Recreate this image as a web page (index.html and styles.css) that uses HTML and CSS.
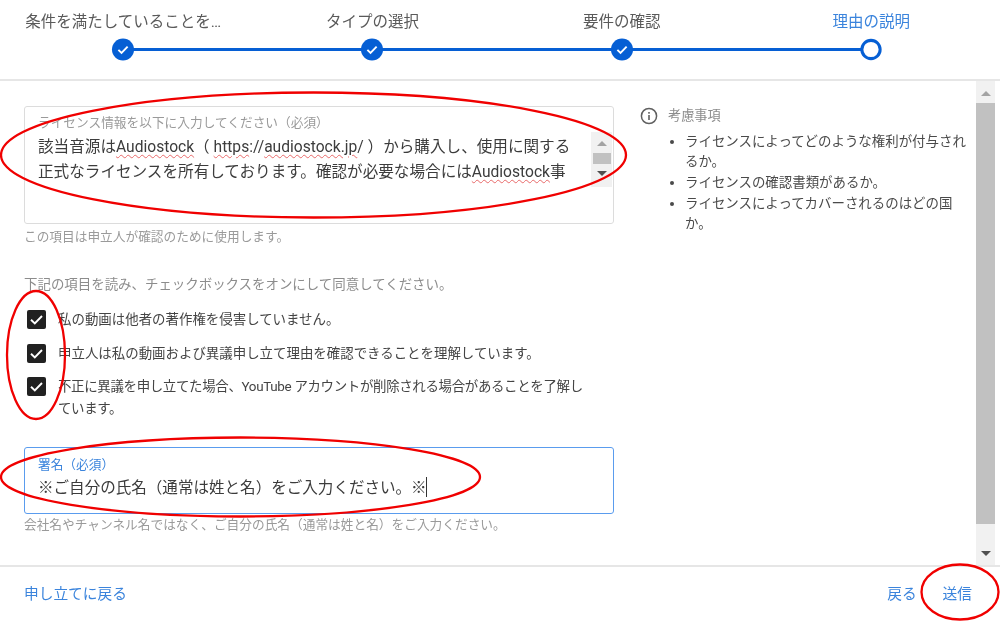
FILE: index.html
```html
<!DOCTYPE html>
<html lang="ja">
<head>
<meta charset="utf-8">
<title>理由の説明</title>
<link rel="stylesheet" href="styles.css">
</head>
<body>
<div class="app">
  <header class="stepper">
    <div class="step">
      <div class="step-label">条件を満たしていることを…</div>
      <div class="step-track first">
        <svg class="dot" viewBox="0 0 20 20"><circle cx="10" cy="10" r="10.5" fill="#065fd4"/><path d="M5.6 10.3l3 3 5.8-6" fill="none" stroke="#fff" stroke-width="1.8"/></svg>
      </div>
    </div>
    <div class="step">
      <div class="step-label">タイプの選択</div>
      <div class="step-track">
        <svg class="dot" viewBox="0 0 20 20"><circle cx="10" cy="10" r="10.5" fill="#065fd4"/><path d="M5.6 10.3l3 3 5.8-6" fill="none" stroke="#fff" stroke-width="1.8"/></svg>
      </div>
    </div>
    <div class="step">
      <div class="step-label">要件の確認</div>
      <div class="step-track">
        <svg class="dot" viewBox="0 0 20 20"><circle cx="10" cy="10" r="10.5" fill="#065fd4"/><path d="M5.6 10.3l3 3 5.8-6" fill="none" stroke="#fff" stroke-width="1.8"/></svg>
      </div>
    </div>
    <div class="step">
      <div class="step-label active">理由の説明</div>
      <div class="step-track last">
        <svg class="dot" viewBox="0 0 20 20"><circle cx="10" cy="10" r="8.7" fill="#fff" stroke="#065fd4" stroke-width="2.9"/></svg>
      </div>
    </div>
  </header>

  <div class="middle">
    <main class="content">
      <section class="form">
        <div class="field license">
          <div class="field-label">ライセンス情報を以下に入力してください（必須）</div>
          <div class="field-text"><div class="line">該当音源は<span class="sp">Audiostock</span>（ <span class="sp">https</span>://<span class="sp">audiostock.jp</span>/ ）から購入し、使用に関する</div><div class="line">正式なライセンスを所有しております。確認が必要な場合には<span class="sp">Audiostock</span>事</div></div>
          <div class="mini-scroll">
            <span class="arrow up small"></span>
            <span class="mini-thumb"></span>
            <span class="arrow down small"></span>
          </div>
        </div>
        <p class="helper">この項目は申立人が確認のために使用します。</p>

        <p class="agree-intro">下記の項目を読み、チェックボックスをオンにして同意してください。</p>
        <div class="checks">
          <div class="check">
            <svg class="box" viewBox="0 0 19 19"><rect width="19" height="19" rx="2" fill="#212121"/><path d="M4 9.8l3.8 3.7L15 6" fill="none" stroke="#fff" stroke-width="1.9"/></svg>
            <span>私の動画は他者の著作権を侵害していません。</span>
          </div>
          <div class="check">
            <svg class="box" viewBox="0 0 19 19"><rect width="19" height="19" rx="2" fill="#212121"/><path d="M4 9.8l3.8 3.7L15 6" fill="none" stroke="#fff" stroke-width="1.9"/></svg>
            <span>申立人は私の動画および異議申し立て理由を確認できることを理解しています。</span>
          </div>
          <div class="check tight">
            <svg class="box" viewBox="0 0 19 19"><rect width="19" height="19" rx="2" fill="#212121"/><path d="M4 9.8l3.8 3.7L15 6" fill="none" stroke="#fff" stroke-width="1.9"/></svg>
            <span>不正に異議を申し立てた場合、YouTube アカウントが削除される場合があることを了解しています。</span>
          </div>
        </div>

        <div class="field signature">
          <div class="field-label focus">署名（必須）</div>
          <div class="field-text">※ご自分の氏名（通常は姓と名）をご入力ください。※<span class="caret"></span></div>
        </div>
        <p class="helper">会社名やチャンネル名ではなく、ご自分の氏名（通常は姓と名）をご入力ください。</p>
      </section>

      <aside class="side">
        <div class="side-title">
          <svg class="info" viewBox="0 0 18 18"><circle cx="9" cy="9" r="7.6" fill="none" stroke="#606060" stroke-width="1.5"/><rect x="8.2" y="8" width="1.6" height="5" fill="#606060"/><rect x="8.2" y="5" width="1.6" height="1.7" fill="#606060"/></svg>
          <span>考慮事項</span>
        </div>
        <ul class="side-list">
          <li>ライセンスによってどのような権利が付与されるか。</li>
          <li>ライセンスの確認書類があるか。</li>
          <li>ライセンスによってカバーされるのはどの国か。</li>
        </ul>
      </aside>
    </main>
    <div class="scrollbar">
      <span class="arrow up"></span>
      <span class="thumb"></span>
      <span class="arrow down"></span>
    </div>
  </div>

  <footer class="footer">
    <a class="link" href="#">申し立てに戻る</a>
    <div class="actions">
      <a class="link" href="#">戻る</a>
      <a class="link" href="#">送信</a>
    </div>
  </footer>

  <svg class="marks" viewBox="0 0 1000 621">
    <ellipse cx="313.5" cy="155" rx="312.5" ry="62.5"/>
    <ellipse cx="36" cy="355" rx="29" ry="64"/>
    <ellipse cx="240.5" cy="477" rx="239.5" ry="39.5"/>
    <ellipse cx="960" cy="592" rx="38.5" ry="27.5"/>
  </svg>
</div>
</body>
</html>
```

FILE: styles.css
```css
* { box-sizing: border-box; }
html, body { margin: 0; padding: 0; background: #fff; }
body {
  font-family: Roboto, "Noto Sans CJK JP", "Liberation Sans", sans-serif;
  color: #3c3c3c;
  overflow: hidden;
}
.app {
  position: relative;
  width: 1000px;
  height: 621px;
  display: flex;
  flex-direction: column;
  filter: blur(0.4px);
}
.stepper {
  height: 81px;
  flex: none;
  display: grid;
  grid-template-columns: repeat(4, 249.33px);
  justify-content: start;
  border-bottom: 2px solid #e6e6e6;
}
.step {
  display: flex;
  flex-direction: column;
  align-items: center;
  padding-top: 11px;
  min-width: 0;
  transform: translateX(-1.5px);
}
.step-label {
  width: 197px;
  height: 23px;
  font-size: 15.5px;
  line-height: 23px;
  text-align: center;
  color: #5a5a5a;
  white-space: nowrap;
  overflow: hidden;
}
.step-label.active { color: #3b84dc; }
.step-track {
  align-self: stretch;
  height: 21px;
  margin: 5px -1px 0;
  display: flex;
  justify-content: center;
  background: linear-gradient(#065fd4, #065fd4) center / 100% 3px no-repeat;
}
.step-track.first { background-size: 50% 3px; background-position: right center; }
.step-track.last { background-size: 50% 3px; background-position: left center; }
.dot { width: 21px; height: 21px; display: block; overflow: visible; }

.middle {
  flex: 1;
  min-height: 0;
  display: flex;
  padding-right: 5px;
}
.content {
  flex: 1;
  min-width: 0;
  display: flex;
  padding: 25px 0 0 24px;
}
.form { width: 590px; flex: none; }
.field {
  position: relative;
  border: 1px solid #dcdcdc;
  border-radius: 3px;
  padding: 7px 13px 0;
}
.field.license { height: 118px; }
.field.signature {
  height: 67px;
  margin-top: 27px;
  padding-top: 8px;
  border-color: #5a9cee;
}
.field-label {
  font-size: 12.7px;
  line-height: 17px;
  color: #9a9a9a;
  white-space: nowrap;
}
.field-label.focus { color: #3b84dc; }
.field-text {
  font-size: 15.6px;
  line-height: 25px;
  color: #3c3c3c;
  white-space: nowrap;
}
.license .field-text { margin-top: 4px; }
.signature .field-text { margin-top: 3px; font-size: 15.55px; }
.sp {
  text-decoration: underline wavy #e86a6a 1px;
  text-underline-offset: 2px;
}
.caret {
  display: inline-block;
  width: 1px;
  height: 20px;
  margin-left: -1px;
  background: #333;
  vertical-align: -4px;
}
.mini-scroll {
  position: absolute;
  top: 25px;
  right: 1px;
  width: 21px;
  height: 55px;
  background: #f1f1f1;
  display: flex;
  flex-direction: column;
  align-items: center;
}
.mini-thumb {
  width: 18px;
  height: 11px;
  margin-top: 7px;
  background: #c1c1c1;
}
.arrow {
  display: block;
  width: 0;
  height: 0;
  border-left: 5px solid transparent;
  border-right: 5px solid transparent;
}
.arrow.up { border-bottom: 5px solid #a3a3a3; }
.arrow.down { border-top: 5px solid #505050; }
.arrow.small.up { margin-top: 9px; }
.arrow.small.down { margin-top: 7px; }
.helper {
  margin: 0;
  font-size: 12.7px;
  line-height: 18px;
  color: #9a9a9a;
  white-space: nowrap;
}
.license + .helper { margin-top: 4px; }
.signature + .helper { margin-top: 2px; }
.agree-intro {
  margin: 30px 0 0;
  font-size: 13.45px;
  line-height: 18px;
  color: #8c8c8c;
  white-space: nowrap;
}
.checks {
  margin-top: 15px;
  display: flex;
  flex-direction: column;
}
.check {
  display: flex;
  align-items: flex-start;
  font-size: 13.45px;
  line-height: 22px;
  padding: 0 0 11.5px 3px;
  width: 570px;
  color: #444;
}
.check:last-child { padding-bottom: 0; }
.check.tight { letter-spacing: -0.33px; }
.check span { padding-left: 12px; min-width: 0; }
.box { width: 19px; height: 19px; flex: none; margin-top: 1px; display: block; }

.side { width: 356px; padding-left: 26px; flex: none; }
.side-title {
  display: flex;
  align-items: center;
  gap: 10px;
  font-size: 13.2px;
  line-height: 20px;
  color: #8c8c8c;
}
.info { width: 18px; height: 18px; flex: none; display: block; }
.side-list {
  margin: 5.5px 0 0;
  padding: 0 0 0 45px;
  font-size: 13.45px;
  line-height: 20.7px;
  color: #4a4a4a;
}

.scrollbar {
  width: 19px;
  flex: none;
  background: #f1f1f1;
  display: flex;
  flex-direction: column;
  align-items: center;
}
.scrollbar .thumb {
  width: 19px;
  height: 421px;
  margin-top: 7px;
  background: #c1c1c1;
}
.scrollbar .arrow.up { margin-top: 10px; }
.scrollbar .arrow.down { margin-top: 27px; }

.footer {
  height: 56px;
  flex: none;
  border-top: 2px solid #e6e6e6;
  display: flex;
  align-items: center;
  justify-content: space-between;
  padding: 0 28px 4px 24px;
}
.actions { display: flex; gap: 26px; }
.link {
  font-size: 14.7px;
  color: #3b84dc;
  text-decoration: none;
}

.marks {
  position: absolute;
  inset: 0;
  width: 1000px;
  height: 621px;
  fill: none;
  stroke: #f00000;
  stroke-width: 2.3;
  pointer-events: none;
}
```
